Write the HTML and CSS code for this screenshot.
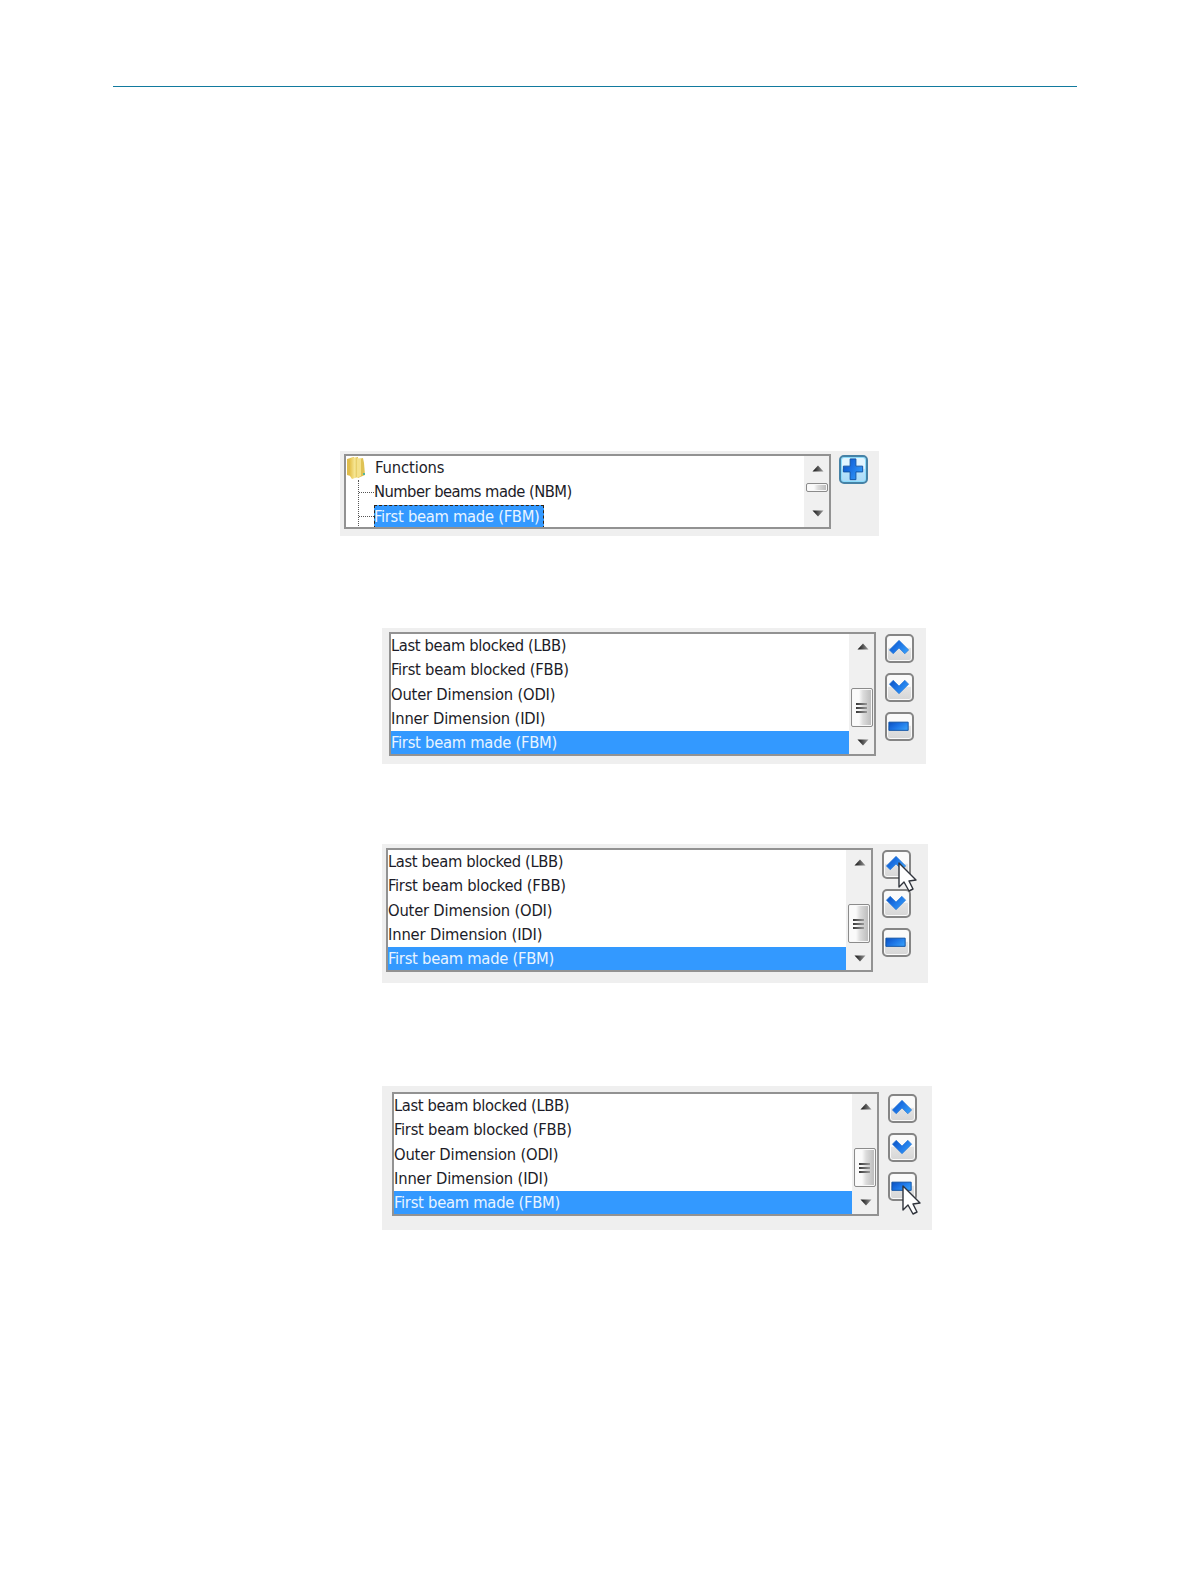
FILE: index.html
```html
<!DOCTYPE html>
<html lang="en">
<head>
<meta charset="utf-8">
<title>Functions</title>
<link rel="stylesheet" href="styles.css">
</head>
<body>
<svg class="defs" aria-hidden="true">
  <defs>
    <linearGradient id="blue" x1="0" y1="0" x2="1" y2="0.6">
      <stop offset="0" stop-color="#0b50c0"/><stop offset="0.5" stop-color="#1b72e4"/><stop offset="1" stop-color="#3398f6"/>
    </linearGradient>
    <linearGradient id="gold"><stop offset="0" stop-color="#e5c24e"/><stop offset="0.6" stop-color="#f7e795"/><stop offset="1" stop-color="#d9b945"/></linearGradient>
    <linearGradient id="arrow"><stop offset="0" stop-color="#111"/><stop offset="1" stop-color="#999"/></linearGradient>
    <symbol id="up" viewBox="0 0 28 28"><path d="M3.500 15.500 13.500 5.500l10 10-4 4-6-6-6 6z" fill="url(#blue)" stroke="#2878d4" stroke-width=".7"/></symbol>
    <symbol id="down" viewBox="0 0 28 28"><path d="M3.500 10.500l4-4 6 6 6-6 4 4-10 10z" fill="url(#blue)" stroke="#2878d4" stroke-width=".7"/></symbol>
    <symbol id="minus" viewBox="0 0 28 28"><path d="M3 9.500h20v8.500h-20z" fill="url(#blue)" stroke="#1254a6"/></symbol>
    <symbol id="plus" viewBox="0 0 28 28"><path d="M10.500 3h6v7.500h7v6h-7v8h-6v-8h-7v-6h7z" fill="url(#blue)" stroke="#1254a6"/></symbol>
    <symbol id="tri-up" viewBox="0 0 12 7"><path d="M6 0.500 11.500 6.500H.5z" fill="url(#arrow)"/></symbol>
    <symbol id="tri-down" viewBox="0 0 12 7"><path d="M.5.5h11L6 6.500z" fill="url(#arrow)"/></symbol>
    <symbol id="pointer" viewBox="0 0 20 31"><path d="M1 1v24l5-5 5 9 4-2-4-8 7-1z" fill="#fff" stroke="#30343c" stroke-width="1.400" stroke-linejoin="round"/></symbol>
  </defs>
</svg>
<main class="page">
  <hr class="rule">

  <section class="panel panel-tree">
    <div class="list">
      <div class="tree">
        <div class="branch-col">
          <svg class="folder" viewBox="0 0 20 24"><path d="M1 3 8 1v20l-7-2z" fill="#e0bd4c"/><path d="M4 2 12 1v20l-6 2-2-3z" fill="url(#gold)"/><path d="M12 3l5-1 1 5 1 12-7 3z" fill="#dfc254"/><path d="M11 2l4 1v17l-4 2z" fill="#f4e18a"/><path d="M17 17h2v2h-2z" fill="#55b59b"/></svg>
          <div class="branches"><i></i><i></i></div>
        </div>
        <ul class="rows">
          <li class="t-root">Functions</li>
          <li class="t-nbm">Number beams made (NBM)</li>
          <li class="selected t-fbm">First beam made (FBM)</li>
        </ul>
      </div>
      <div class="scrollbar">
        <svg class="tri"><use href="#tri-up"/></svg>
        <span class="thumb"></span>
        <svg class="tri"><use href="#tri-down"/></svg>
      </div>
    </div>
    <div class="buttons"><span class="button add"><svg><use href="#plus"/></svg></span></div>
  </section>

  <section class="panel panel-added">
    <div class="list">
      <ul class="rows">
        <li class="t-lbb">Last beam blocked (LBB)</li><li class="t-fbb">First beam blocked (FBB)</li><li class="t-odi">Outer Dimension (ODI)</li><li class="t-idi">Inner Dimension (IDI)</li><li class="selected t-fbm">First beam made (FBM)</li>
      </ul>
      <div class="scrollbar">
        <svg class="tri"><use href="#tri-up"/></svg><span class="thumb"><i></i><i></i><i></i></span><svg class="tri"><use href="#tri-down"/></svg>
      </div>
    </div>
    <div class="buttons">
      <span class="button"><svg><use href="#up"/></svg></span>
      <span class="button"><svg><use href="#down"/></svg></span>
      <span class="button"><svg><use href="#minus"/></svg></span>
    </div>
  </section>

  <section class="panel panel-move">
    <div class="list">
      <ul class="rows">
        <li class="t-lbb">Last beam blocked (LBB)</li><li class="t-fbb">First beam blocked (FBB)</li><li class="t-odi">Outer Dimension (ODI)</li><li class="t-idi">Inner Dimension (IDI)</li><li class="selected t-fbm">First beam made (FBM)</li>
      </ul>
      <div class="scrollbar">
        <svg class="tri"><use href="#tri-up"/></svg><span class="thumb"><i></i><i></i><i></i></span><svg class="tri"><use href="#tri-down"/></svg>
      </div>
    </div>
    <div class="buttons">
      <span class="button"><svg><use href="#up"/></svg><svg class="pointer"><use href="#pointer"/></svg></span>
      <span class="button"><svg><use href="#down"/></svg></span>
      <span class="button"><svg><use href="#minus"/></svg></span>
    </div>
  </section>

  <section class="panel panel-remove">
    <div class="list">
      <ul class="rows">
        <li class="t-lbb">Last beam blocked (LBB)</li><li class="t-fbb">First beam blocked (FBB)</li><li class="t-odi">Outer Dimension (ODI)</li><li class="t-idi">Inner Dimension (IDI)</li><li class="selected t-fbm">First beam made (FBM)</li>
      </ul>
      <div class="scrollbar">
        <svg class="tri"><use href="#tri-up"/></svg><span class="thumb"><i></i><i></i><i></i></span><svg class="tri"><use href="#tri-down"/></svg>
      </div>
    </div>
    <div class="buttons">
      <span class="button"><svg><use href="#up"/></svg></span>
      <span class="button"><svg><use href="#down"/></svg></span>
      <span class="button"><svg><use href="#minus"/></svg><svg class="pointer"><use href="#pointer"/></svg></span>
    </div>
  </section>
</main>
</body>
</html>
```
FILE: styles.css
```css
* { box-sizing: border-box; }
body { margin: 0; background: #fff; color: #1c1c28; font: 16.4px/24.3px Tahoma, "DejaVu Sans Condensed", "DejaVu Sans", sans-serif; font-stretch: condensed; }
.defs { position: absolute; width: 0; height: 0; }
.page { width: 1191px; height: 1584px; padding-top: 86px; display: flex; flex-direction: column; align-items: flex-start; }
.rule { width: 964px; height: 1px; margin: 0 0 364px 113px; border: 0; background: #127a9e; }

.panel { display: flex; align-items: flex-start; background: #efefef; flex: none; }
.panel-tree { width: 539px; height: 85px; margin: 0 0 92px 340px; padding: 3px 0 0 4px; gap: 8px; }
.panel-added { width: 544px; height: 136px; margin: 0 0 80px 382px; padding: 4px 0 0 7px; gap: 9px; }
.panel-move { width: 546px; height: 139px; margin: 0 0 103px 382px; padding: 4px 0 0 4px; gap: 9px; }
.panel-remove { width: 550px; height: 144px; margin: 0 0 0 382px; padding: 6px 0 0 10px; gap: 9px; }

.list { width: 487px; height: 124px; display: flex; background: #fff; border: 2px solid #929292; }
.rows { flex: 1; margin: 0; padding: 0; list-style: none; white-space: nowrap; overflow: hidden; }
.rows li { height: 24.3px; line-height: 23.5px; }
.rows .selected { background: #3399ff; color: #e8f4ff; }
.t-root { letter-spacing: -0.1px; }
.t-nbm { letter-spacing: -0.54px; }
.t-lbb { letter-spacing: -0.36px; }
.t-fbb { letter-spacing: -0.26px; }
.t-odi { letter-spacing: -0.2px; }
.t-idi { letter-spacing: -0.15px; }
.t-fbm { letter-spacing: -0.26px; }
.panel-tree .list { height: 75px; }

.tree { flex: 1; display: flex; overflow: hidden; }
.branch-col { width: 28px; flex: none; }
.folder { display: block; width: 20px; height: 24px; }
.branches { height: 50px; margin-left: 12px; border-left: 1px dotted #555; }
.branches i { display: block; height: 12.5px; border-bottom: 1px dotted #555; }
.branches i + i { height: 24.3px; }
.panel-tree .rows li { line-height: 24.3px; }
.panel-tree .t-root { padding-left: 1px; }
.panel-tree .rows .selected { width: 170px; border: 1px dashed #332211; line-height: 22px; text-indent: -1px; letter-spacing: -0.28px; }

.scrollbar { width: 25px; flex: none; display: flex; flex-direction: column; align-items: center; background: #f0f0f0; padding: 9px 0 8px 1px; }
.tri { width: 12px; height: 7px; display: block; flex: none; margin-left: 2px; }
.thumb { width: 22px; height: 39px; margin: 38px 0 12px; border: 1px solid #8b8b8b; border-radius: 2px; background: linear-gradient(90deg, #fafafa 0 35%, #dcdcdc 55%, #b9b9b9); display: flex; flex-direction: column; align-items: center; justify-content: center; gap: 2px; box-shadow: inset 0 0 0 1px #f8f8f8; }
.thumb i { width: 11px; height: 2px; margin-right: 1px; background: linear-gradient(90deg, #383838, #999); }
.panel-tree .thumb { height: 9px; margin: 11px 0 18px; }

.buttons { display: flex; flex-direction: column; gap: 10.4px; padding-top: 1.5px; }
.button { position: relative; width: 29px; height: 29px; border: 2px solid #858585; border-radius: 5px; background: linear-gradient(#fafafa 0 45%, #e3e3e3 50%, #d6d6d6); box-shadow: inset 0 0 0 1px #fafafa; }
.button svg { display: block; width: 27px; height: 27px; margin: -1px; }
.panel-tree .buttons { padding-top: 1px; }
.button.add { border-color: #4682a6; background: linear-gradient(#e2f5ff 0 45%, #bce4fb 50%, #a9daf7); box-shadow: inset 0 0 0 1px #8bdcfc; }
.button .pointer { position: absolute; z-index: 1; width: 20px; height: 31px; left: 15px; top: 11px; }
.panel-remove .button .pointer { left: 13px; top: 12px; }
```
